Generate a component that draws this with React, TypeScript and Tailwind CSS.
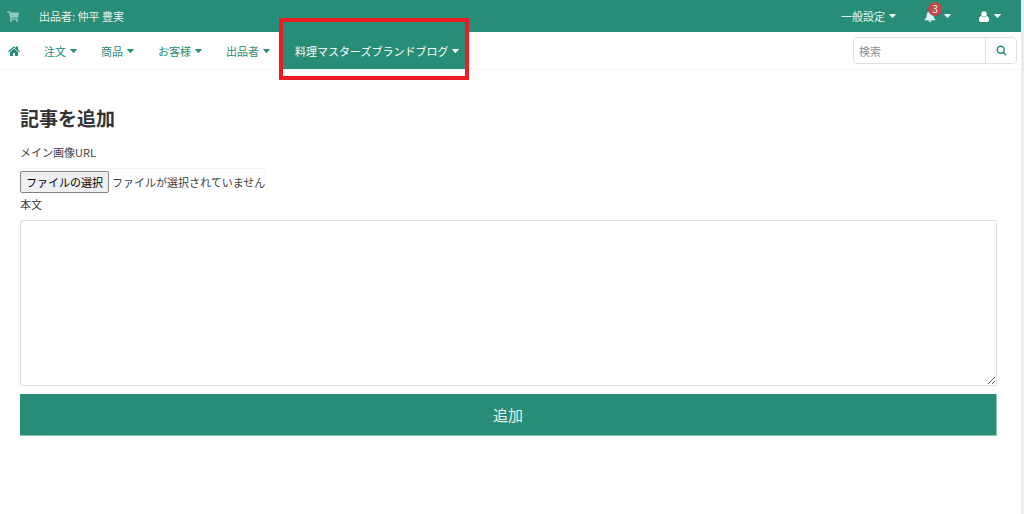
import React, { useRef, useState } from 'react';
import { FaShoppingCart } from 'react-icons/fa';

const menus = ['注文', '商品', 'お客様', '出品者'];

const Caret: React.FC = () => (
  <svg className="w-[7px] h-1 shrink-0" viewBox="0 0 7 4" fill="currentColor" aria-hidden="true">
    <path d="M0.4 0h6.2q.6 0 .2.5L3.9 3.7q-.4.4-.8 0L.2.5Q-.2 0 .4 0z" />
  </svg>
);

const HomeIcon: React.FC = () => (
  <svg className="h-3 w-3" viewBox="0 0 24 24" fill="currentColor" aria-hidden="true">
    <path d="M12 7.2 4 14v7.2q0 .8.8.8H10v-6h4v6h5.2q.8 0 .8-.8V14z" />
    <path d="M23.5 12.2 20 9.2V3.5q0-.5-.5-.5h-3q-.5 0-.5.5v2.4l-2.8-2.4q-1.2-.9-2.4 0L.5 12.2q-.4.4 0 .8l.8.9q.4.4.8 0L12 5.7l9.9 8.2q.4.4.8 0l.8-.9q.4-.4 0-.8z" />
  </svg>
);

const BellIcon: React.FC = () => (
  <svg className="h-3 w-3 text-[#d9eefa]" viewBox="0 0 24 24" fill="currentColor" aria-hidden="true">
    <path d="M12 1q1.6 0 1.6 1.8 5 1 5 7 0 6.200 4.400 9 0 1.700-1.800 1.700H2.800Q1 20.500 1 18.800q4.400-2.800 4.400-9 0-6 5-7Q10.400 1 12 1z" />
    <path d="M8.800 20.500h6.400q0 3.300-3.200 3.300t-3.200-3.300z" />
  </svg>
);

const UserIcon: React.FC = () => (
  <svg className="h-[11px] w-[10px]" viewBox="0 0 20 22" fill="currentColor" aria-hidden="true">
    <circle cx="10" cy="6" r="5.500" />
    <path d="M4.800 10q2.200 2.400 5.200 2.400t5.200-2.400q4.800.6 4.800 8 0 4-3.400 4H3.400Q0 22 0 18q0-7.400 4.800-8z" />
  </svg>
);

const SearchIcon: React.FC = () => (
  <svg className="size-[11px]" viewBox="0 0 22 22" fill="none" stroke="currentColor" strokeWidth="3" aria-hidden="true">
    <circle cx="9.500" cy="9.500" r="7" />
    <path d="m14.500 14.500 5 5" strokeLinecap="round" />
  </svg>
);

const TopBar: React.FC = () => (
  <header className="flex h-8 items-center bg-[#288d76] pl-[7px] pr-5 text-[#e4f3ee]">
    <a href="#" aria-label="ショップ" className="text-[#8fc9b9]">
      <FaShoppingCart className="h-[11px] w-3" />
    </a>
    <span className="ml-5">出品者: 仲平 豊実</span>
    <div className="ml-auto flex items-center">
      <button className="flex items-center gap-1">
        一般設定
        <Caret />
      </button>
      <button className="relative ml-7 flex items-center gap-2" aria-label="お知らせ">
        <BellIcon />
        <span className="absolute -top-2 left-1 flex size-[14px] items-center justify-center rounded-full bg-[#c1484a] text-[10px] leading-none text-white">
          3
        </span>
        <Caret />
      </button>
      <button className="ml-7 flex items-center gap-[5px] text-white" aria-label="アカウント">
        <UserIcon />
        <Caret />
      </button>
    </div>
  </header>
);

const NavBar: React.FC = () => (
  <nav className="flex h-[38px] items-stretch border-b border-[#f5f6f7] pl-2 pr-1 text-[#288d76]">
    <a href="#" aria-label="ホーム" className="mr-3 flex items-center">
      <HomeIcon />
    </a>
    {menus.map((menu) => (
      <button key={menu} className="flex items-center gap-1 px-3">
        {menu}
        <Caret />
      </button>
    ))}
    <button className="relative ml-px flex items-center gap-1 bg-[#288d76] pl-3 pr-1.5 text-white">
      料理マスターズブランドブログ
      <Caret />
      <span className="absolute -inset-x-1 -bottom-[11px] -top-[14px] border-4 border-[#ed1c24]">
        <span className="block h-[10px] bg-[#288d76]" />
      </span>
    </button>
    <form className="ml-auto flex h-[27px] w-[164px] self-center rounded-sm border border-[#dde2e8]">
      <input
        type="search"
        aria-label="検索"
        placeholder="検索"
        className="min-w-0 flex-1 px-[5px] outline-none placeholder:text-[#909090]"
      />
      <button type="button" aria-label="検索する" className="flex w-[31px] items-center justify-center border-l border-[#dde2e8]">
        <SearchIcon />
      </button>
    </form>
  </nav>
);

const App: React.FC = () => {
  const fileInput = useRef<HTMLInputElement>(null);
  const [fileName, setFileName] = useState('');

  return (
    <div className="min-h-screen border-r-3 border-[#eaedf1] bg-white font-['Noto_Sans_CJK_JP',sans-serif] text-[11px] leading-4 text-[#404040]">
      <TopBar />
      <NavBar />
      <main className="pl-5 pr-6 pt-[34px]">
        <h1 className="text-[19px] font-bold leading-7 text-[#333]">記事を追加</h1>
        <form>
          <label htmlFor="main-image" className="mt-3 block">
            メイン画像URL
          </label>
          <div className="relative mt-2 flex w-fit items-center gap-[3px] border-r border-t border-[#f4f5f6] pt-0.5">
            <button
              type="button"
              onClick={() => fileInput.current?.click()}
              className="h-[22px] rounded-xs border border-[#858585] bg-[#efefef] px-[5px] text-black"
            >
              ファイルの選択
            </button>
            <span>{fileName || 'ファイルが選択されていません'}</span>
            <input
              ref={fileInput}
              id="main-image"
              type="file"
              tabIndex={-1}
              className="sr-only"
              onChange={(e) => setFileName(e.target.files?.[0]?.name ?? '')}
            />
          </div>
          <label htmlFor="body" className="mt-[3px] block">
            本文
          </label>
          <textarea
            id="body"
            className="mt-2 block h-[166px] w-full resize-y rounded-xs border border-[#dde2e8] p-2 outline-none"
          />
          <button type="button" className="mt-2 h-[42px] w-full border-b border-r border-[#8cc5b6] bg-[#288d76] text-[15px] text-[#e9f5f1]">
            追加
          </button>
        </form>
      </main>
    </div>
  );
};

export default App;
